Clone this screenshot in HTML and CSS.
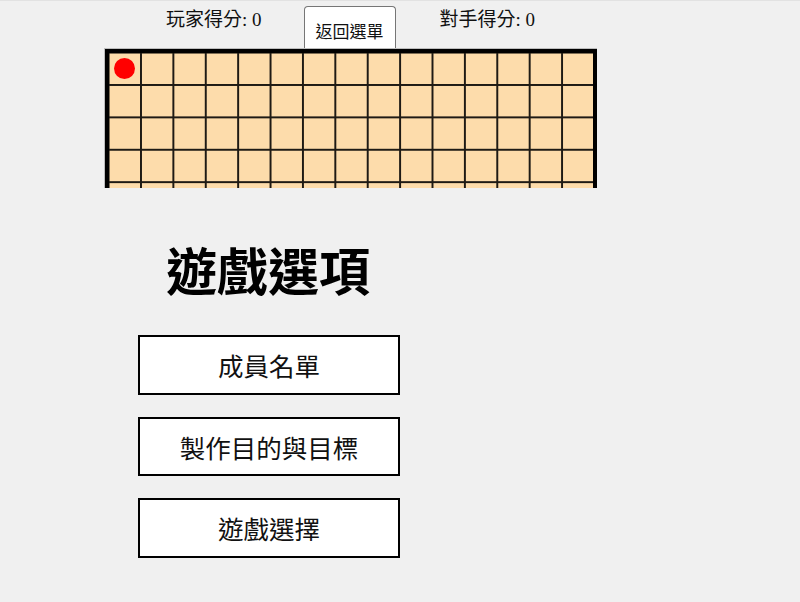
FILE: index.html
```html
<!DOCTYPE html>
<html lang="zh-Hant">
<head>
<meta charset="utf-8">
<title>遊戲選項</title>
<link rel="stylesheet" href="styles.css">
</head>
<body>
<div class="game">
  <div class="topbar">
    <span class="score">玩家得分: 0</span>
    <button class="back">返回選單</button>
    <span class="score">對手得分: 0</span>
  </div>
  <div class="board-wrap">
    <div class="board">
      <div class="piece"></div>
    </div>
  </div>
</div>
<div class="menu">
  <h1 class="title">遊戲選項</h1>
  <button class="menu-btn">成員名單</button>
  <button class="menu-btn">製作目的與目標</button>
  <button class="menu-btn">遊戲選擇</button>
</div>
</body>
</html>
```

FILE: styles.css
```css
html, body {
  margin: 0;
  padding: 0;
}
body {
  background: #f0f0f0;
  border-top: 1px solid #e2e2e2;
  min-height: 601px;
  font-family: "Liberation Serif", "Noto Sans CJK TC", serif;
}
.game {
  margin-left: 104px;
  width: 493px;
}
.topbar {
  display: flex;
  align-items: flex-start;
  height: 47px;
  padding-left: 62px;
}
.score {
  font-size: 19px;
  line-height: 22px;
  padding-top: 8px;
  color: #111;
}
.back {
  margin: 5px 44px 0 42px;
  width: 92px;
  height: 43px;
  background: #fff;
  border: 1px solid #767676;
  border-bottom: none;
  border-radius: 4px 4px 0 0;
  font-family: "Noto Sans CJK TC", sans-serif;
  font-size: 17px;
  color: #111;
  padding: 4px 0 0;
}
.board-wrap {
  height: 140px;
  overflow: hidden;
}
.board {
  position: relative;
  width: 484px;
  height: 486px;
  border: 4px solid #000;
  outline: 1px solid #bdbdbd;
  margin: 1px 0 0 1px;
  background-color: #fddcab;
  background-image:
    linear-gradient(to right, #1e1a14 2px, transparent 2px),
    linear-gradient(to bottom, #1e1a14 2px, transparent 2px);
  background-size: 32.4px 32.4px;
  background-position: 31px 31px;
}
.piece {
  position: absolute;
  left: 5px;
  top: 5px;
  width: 21px;
  height: 21px;
  border-radius: 50%;
  background: #ff0000;
}
.menu {
  padding-left: 138px;
  display: flex;
  flex-direction: column;
  align-items: flex-start;
}
.title {
  margin: 51px 0 36px 28px;
  font-family: "Noto Sans CJK TC", sans-serif;
  font-weight: 700;
  font-size: 51px;
  line-height: 60px;
  color: #000;
}
.menu-btn {
  width: 262px;
  height: 59.5px;
  margin-bottom: 22px;
  background: #fff;
  border: 2px solid #000;
  font-family: "Noto Sans CJK TC", sans-serif;
  font-size: 25.5px;
  color: #111;
  padding: 0;
}
```
